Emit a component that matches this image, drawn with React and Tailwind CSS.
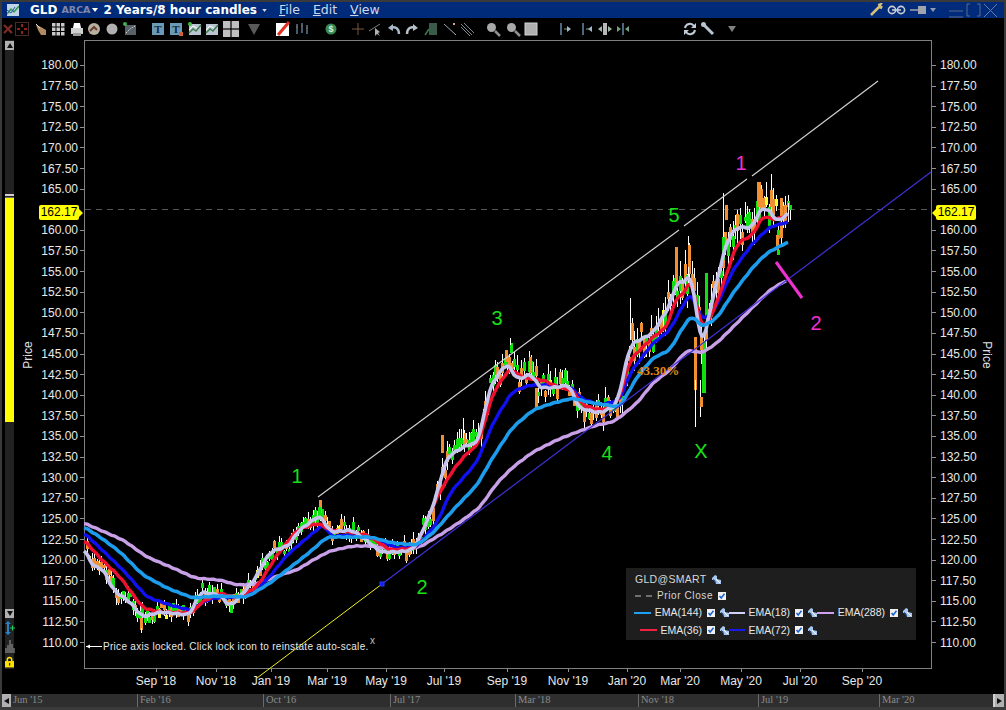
import React from 'react';

// Traced series, page coordinates [x, y]
const EMA18 = [[84,548],[93,567],[103,568],[113,590],[130,602],[142,617],[160,612],[190,615],[200,592],[220,595],[230,607],[253,582],[270,552],[290,545],[297,532],[320,515],[330,532],[352,530],[370,543],[380,552],[397,552],[413,550],[420,537],[433,507],[447,457],[467,445],[478,443],[490,387],[507,362],[517,380],[533,373],[537,387],[550,388],[570,385],[578,408],[600,413],[617,405],[630,345],[653,333],[670,305],[678,278],[685,287],[690,267],[702,350],[710,310],[727,240],[737,227],[753,228],[760,208],[770,210],[777,223],[788,213]];
const EMA36 = [[84,540],[100,558],[120,577],[143,608],[160,612],[193,613],[200,603],[220,593],[237,598],[257,587],[277,555],[297,530],[318,523],[330,530],[350,532],[367,535],[390,550],[417,548],[420,537],[437,497],[453,470],[467,453],[478,445],[493,393],[510,368],[523,378],[543,380],[560,388],[573,390],[582,405],[600,410],[617,405],[630,360],[653,337],[667,327],[678,292],[683,300],[690,275],[702,330],[713,313],[727,273],[737,243],[753,235],[763,215],[773,220],[780,218],[788,215]];
const EMA72 = [[84,533],[100,548],[123,570],[147,597],[170,605],[193,611],[197,605],[213,598],[243,597],[267,580],[287,555],[307,538],[325,523],[330,537],[347,535],[373,538],[397,548],[417,547],[420,543],[437,523],[450,493],[477,462],[493,423],[512,392],[530,385],[547,385],[573,388],[580,398],[600,405],[620,400],[630,373],[653,343],[670,330],[682,307],[691,292],[702,320],[713,313],[733,270],[753,243],[770,227],[788,222]];
const EMA144 = [[84,527],[100,537],[120,552],[143,575],[167,588],[193,598],[217,596],[247,597],[270,583],[287,570],[310,552],[327,537],[347,537],[370,537],[393,543],[417,545],[433,533],[453,510],[477,485],[493,457],[512,428],[533,410],[550,404],[573,398],[587,402],[607,405],[620,407],[637,377],[653,358],[670,350],[683,327],[692,315],[702,327],[717,318],[733,293],[753,267],[767,253],[788,242]];
const EMA288 = [[84,523],[100,530],[123,540],[147,557],[173,568],[195,578],[220,580],[237,585],[257,584],[280,575],[297,570],[313,560],[330,551],[353,546],[373,546],[397,550],[420,547],[443,533],[463,520],[480,507],[497,483],[513,467],[533,452],[557,440],[577,432],[597,425],[613,422],[620,417],[637,403],[653,383],[670,370],[687,350],[702,353],[717,343],[733,327],[753,307],[770,290],[787,280]];

// Hand-placed spikes [x, top, bottom, colour]
const SPIKES = [
  [630,298,340,'#ffffff'],[631,323,340,'#f09030'],[675,247,283,'#f09030'],[688,236,285,'#ffffff'],[688,245,267,'#f09030'],
  [694,337,390,'#f09030'],[695,380,427,'#ffffff'],[700,380,417,'#ffffff'],[702,350,393,'#10e010'],[703,350,393,'#10e010'],
  [700,397,407,'#f09030'],[705,273,317,'#10e010'],[723,193,240,'#ffffff'],[725,205,220,'#f09030'],[722,237,260,'#10e010'],
  [757,182,207,'#f09030'],[758,182,207,'#f09030'],[780,198,217,'#f09030'],[788,203,222,'#ffffff'],[776,235,250,'#f09030'],
  [777,250,255,'#10e010'],[319,500,513,'#f09030'],[318,507,520,'#10e010'],[510,343,353,'#10e010'],[510,338,345,'#ffffff'],
  [529,357,373,'#f09030'],[535,388,410,'#f09030'],[441,435,453,'#f09030'],[463,418,440,'#ffffff'],[140,618,630,'#f09030'],
  [141,628,633,'#ffffff'],[505,350,362,'#f09030'],
];

const lerp = (pts, x) => {
  for (let i = 1; i < pts.length; i++) {
    if (x <= pts[i][0]) {
      const [x0, y0] = pts[i - 1];
      const [x1, y1] = pts[i];
      return y0 + ((x - x0) / (x1 - x0)) * (y1 - y0);
    }
  }
  return pts[pts.length - 1][1];
};

// Resample and round off the traced corners, with a small wobble
const smooth = (pts, wobble = 0.5) => {
  const first = pts[0][0];
  const last = pts[pts.length - 1][0];
  const out = [];
  for (let x = first; x <= last; x += 2) {
    let sum = 0;
    for (let d = -4; d <= 4; d += 2) sum += lerp(pts, Math.min(last, Math.max(first, x + d)));
    out.push([x, +(sum / 5 + Math.sin(x * 0.7) * wobble).toFixed(1)]);
  }
  return out.map((p) => p.join(',')).join(' ');
};

// Fixed-seed candles hugging the fast average
const makeCandles = () => {
  let seed = 4711;
  const r = () => {
    seed = (seed * 16807) % 2147483647;
    return seed / 2147483647;
  };
  const out = [];
  for (let x = 86; x < 790; x += 2.4) {
    const c = lerp(EMA18, x);
    const amp = x < 420 ? 8 : x < 620 ? 12 : 18;
    const mid = c + (r() - 0.58) * amp * 1.6;
    const h = 3 + r() * amp * 0.9;
    out.push({
      x: Math.round(x),
      wt: mid - h / 2 - r() * amp * 0.9,
      wb: mid + h / 2 + r() * amp * 0.8,
      t: mid - h / 2,
      b: mid + h / 2,
      col: r() < 0.55 ? '#10e010' : r() < 0.9 ? '#f09030' : '#ffff30',
    });
  }
  return out;
};
const CANDLES = makeCandles();

const PRICES = ['180.00','177.50','175.00','172.50','170.00','167.50','165.00','','160.00','157.50','155.00','152.50','150.00','147.50','145.00','142.50','140.00','137.50','135.00','132.50','130.00','127.50','125.00','122.50','120.00','117.50','115.00','112.50','110.00'];

const DATES = [
  { label: "Sep '18", cls: 'w-[60px]' }, { label: "Nov '18", cls: 'w-[60px]' }, { label: "Jan '19", cls: 'w-[50px]' },
  { label: "Mar '19", cls: 'w-[62px]' }, { label: "May '19", cls: 'w-[56px]' }, { label: "Jul '19", cls: 'w-[60px]' },
  { label: "Sep '19", cls: 'w-[66px]' }, { label: "Nov '19", cls: 'w-[56px]' }, { label: "Jan '20", cls: 'w-[62px]' },
  { label: "Mar '20", cls: 'w-[44px]' }, { label: "May '20", cls: 'w-[78px]' }, { label: "Jul '20", cls: 'w-[40px]' },
  { label: "Sep '20", cls: 'w-[84px]' },
];

const NAV = [
  { label: "Feb '16", cls: 'w-[126px]' }, { label: "Oct '16", cls: 'w-[127px]' }, { label: "Jul '17", cls: 'w-[125px]' },
  { label: "Mar '18", cls: 'w-[123px]' }, { label: "Nov '18", cls: 'w-[120px]' }, { label: "Jul '19", cls: 'w-[121px]' },
  { label: "Mar '20", cls: 'w-[114px]' },
];

function Tool({ children, className = '' }) {
  return (
    <svg viewBox="0 0 16 16" className={`w-[16px] h-[16px] shrink-0 ${className}`}>
      {children}
    </svg>
  );
}

const Grid = ({ c = '#c8c8c8' }) => (
  <g fill={c}>
    <rect x="2" y="2" width="3.5" height="3.5" /><rect x="6.5" y="2" width="3.5" height="3.5" /><rect x="11" y="2" width="3.5" height="3.5" />
    <rect x="2" y="6.5" width="3.5" height="3.5" /><rect x="6.5" y="6.5" width="3.5" height="3.5" /><rect x="11" y="6.5" width="3.5" height="3.5" />
    <rect x="2" y="11" width="3.5" height="3.5" /><rect x="6.5" y="11" width="3.5" height="3.5" /><rect x="11" y="11" width="3.5" height="3.5" />
  </g>
);

const MiniChart = ({ dot }) => (
  <>
    <rect x="2" y="3" width="12" height="11" fill="#b8c4d0" />
    <path d="M2 12 L6 8 L9 10 L14 4" stroke="#3f7f4f" strokeWidth="1.5" fill="none" />
    <path d="M2 9 L6 5 L10 7" stroke="#ffffff" strokeWidth="1" fill="none" />
    {dot && <circle cx="3" cy="3" r="2" fill="#40c040" />}
  </>
);

const TBox = ({ red }) => (
  <>
    <rect x="2" y="2" width="12" height="12" fill="#6a9ab8" />
    <text x="8" y="12" textAnchor="middle" fontSize="11" fontWeight="700" fill="#10283c" fontFamily="'Liberation Serif', serif">T</text>
    {red && <rect x="11" y="11" width="4" height="4" fill="#d06040" />}
  </>
);

const Splitter = ({ d }) => (
  <path d={d} stroke="#6a8aa8" strokeWidth="1.5" fill="none" />
);

function Toolbar() {
  return (
    <div className="h-[22px] bg-black flex items-center shrink-0">
      <Tool className="-ml-[2px]"><path d="M4 4 L12 12 M12 4 L4 12" stroke="#7a2a20" strokeWidth="2.4" /></Tool>
      <Tool className="-ml-[2px]"><rect x="1.5" y="1.5" width="13" height="13" fill="none" stroke="#4a2a2a" /><path d="M8 3 V6 M8 10 V13 M3 8 H6 M10 8 H13" stroke="#c03020" strokeWidth="1.5" /></Tool>
      <Tool className="ml-[3px]"><path d="M3 4 L8 6 L13 9 L13 14 L8 14 L5 9 Z" fill="#b08a60" /><path d="M3 3 L7 7" stroke="#d8d8d8" /></Tool>
      <Tool className="ml-[1px]"><Grid /></Tool>
      <Tool className="ml-[2px]"><rect x="3" y="7" width="12" height="6" fill="#d0d0d0" /><path d="M5 7 L6 2 L12 2 L13 7 Z" fill="#ffffff" /><rect x="5" y="12" width="8" height="3" fill="#9a9a9a" /></Tool>
      <Tool className="ml-[2px]"><circle cx="8" cy="8" r="6" fill="#b8b0a0" /><path d="M4 10 L8 6 L11 9" stroke="#6a4030" strokeWidth="2" fill="none" /></Tool>
      <Tool className="ml-[2px]"><circle cx="8" cy="8" r="5.5" fill="#b0b0b0" /></Tool>
      <Tool className="ml-[2px]"><rect x="3" y="4" width="11" height="10" fill="#586068" /><path d="M4 12 L8 8 L13 5" stroke="#d0d8e0" strokeDasharray="1.5 1" fill="none" /><circle cx="3" cy="3" r="2" fill="#40b050" /></Tool>
      <Tool className="ml-[12px]"><TBox /></Tool>
      <Tool className="ml-[2px]"><TBox red /></Tool>
      <Tool className="ml-[3px]"><MiniChart dot /></Tool>
      <Tool className="ml-[1px]"><MiniChart /></Tool>
      <svg viewBox="0 0 16 16" className="w-[16px] h-[16px] ml-[3px] shrink-0"><rect x="0" y="0" width="7.4" height="7.4" fill="#c0c0c0" /><rect x="8.6" y="0" width="7.4" height="7.4" fill="#c0c0c0" /><rect x="0" y="8.6" width="7.4" height="7.4" fill="#c0c0c0" /><rect x="8.6" y="8.6" width="7.4" height="7.4" fill="#c0c0c0" /></svg>
      <Tool className="ml-[7px]"><path d="M2 3 H14 L8 14 Z" fill="#5a5a5a" /></Tool>
      <Tool className="ml-[13px]"><rect x="1" y="2" width="13" height="13" fill="#ffffff" /><path d="M3 14 L14 1" stroke="#e03020" strokeWidth="3" /></Tool>
      <Tool className="ml-[3px]"><path d="M3 3 V13 M8 2 V12 M13 4 V13" stroke="#5a7a90" strokeWidth="1.5" /><path d="M2 6 H4 M7 5 H9 M12 7 H14" stroke="#8a6a50" /></Tool>
      <Tool className="ml-[13px]"><circle cx="8" cy="8" r="5.5" fill="#3a8a50" /><text x="8" y="11" textAnchor="middle" fontSize="9" fontWeight="700" fill="#d8f0d8" fontFamily="'Liberation Sans', sans-serif">$</text></Tool>
      <Tool className="ml-[11px]"><path d="M8 2 V14 M2 8 H14" stroke="#7a5a40" /></Tool>
      <Tool className="ml-[2px]"><path d="M1 10 L12 3" stroke="#808080" /><path d="M7 7 L7 15 L9 13 L12 15 L10 12 L12 11 Z" fill="#b0b0b0" /></Tool>
      <Tool className="ml-[2px]"><path d="M13 13 C13 7 9 5 4 7" stroke="#a8b8c8" strokeWidth="2.4" fill="none" /><path d="M2 7 L7 3 L7 10 Z" fill="#a8b8c8" /></Tool>
      <Tool className="ml-[2px]"><path d="M3 13 C3 7 7 5 12 7" stroke="#b8c0c8" strokeWidth="2.4" fill="none" /><path d="M14 7 L9 3 L9 10 Z" fill="#b8c0c8" /></Tool>
      <Tool className="ml-[3px]"><rect x="6" y="2" width="8" height="12" fill="#3a5a4a" /><path d="M2 14 L6 8" stroke="#3a7a4a" strokeWidth="1.5" /></Tool>
      <Tool className="ml-[3px]"><path d="M2 3 L14 14" stroke="#a0a8b0" /><rect x="11" y="2" width="2" height="2" fill="#d0a090" /></Tool>
      <Tool className="ml-[1px]"><path d="M2 3 L13 14 M5 2 L15 12 M2 6 L11 15" stroke="#808890" /></Tool>
      <Tool className="ml-[10px]"><circle cx="6.5" cy="6.5" r="4.5" fill="#a8a8a8" /><path d="M10 10 L15 15" stroke="#909090" strokeWidth="2.5" /></Tool>
      <Tool className="ml-[4px]"><circle cx="6.5" cy="6.5" r="4.5" fill="#a8a8a8" /><path d="M10 10 L15 15" stroke="#909090" strokeWidth="2.5" /></Tool>
      <Tool className="ml-[2px]"><rect x="2" y="2" width="12" height="12" fill="#b0b0b0" stroke="#d0d0d0" /></Tool>
      <Tool className="ml-[19px]"><Splitter d="M3 2 V14" /><path d="M6 8 H9" stroke="#7a9a80" /><path d="M9 5 L13 8 L9 11 Z" fill="#a0b8c8" /></Tool>
      <Tool className="ml-[5px]"><Splitter d="M4 2 V14" /><path d="M7 8 H10" stroke="#7a9a80" /><path d="M13 5 L9 8 L13 11 Z" fill="#a0b8c8" /></Tool>
      <Tool className="ml-[2px]"><rect x="6" y="2" width="4" height="12" fill="#b8b8b8" /><path d="M5 5 L1 8 L5 11 Z M11 5 L15 8 L11 11 Z" fill="#a0b8a8" /></Tool>
      <Tool className="ml-[2px]"><Splitter d="M8 2 V14" /><path d="M2 5 L6 8 L2 11 Z M14 5 L10 8 L14 11 Z" fill="#70a080" /></Tool>
      <Tool className="ml-[51px]"><path d="M3 7 A5 5 0 0 1 12 5 M13 9 A5 5 0 0 1 4 11" stroke="#c0ccd8" strokeWidth="2" fill="none" /><path d="M14 2 V7 H9 Z M2 14 V9 H7 Z" fill="#c0ccd8" /></Tool>
      <Tool className="ml-[2px]"><path d="M3 3 L13 13" stroke="#b8c4d0" strokeWidth="3" /><circle cx="3.5" cy="3.5" r="2.5" fill="#b8c4d0" /></Tool>
      <Tool className="ml-[8px]"><path d="M4 5 H12 L8 11 Z" fill="#808080" /></Tool>
    </div>
  );
}

function TitleBar() {
  return (
    <div className="h-[16px] bg-[#002a7a] flex items-center shrink-0 font-['DejaVu_Sans',sans-serif] relative">
      <svg viewBox="0 0 12 12" className="w-[12px] h-[12px] ml-[5px]">
        <rect width="12" height="12" fill="#c0d4e8" />
        <path d="M0 10 L4 5 L7 8 L12 2" stroke="#2a9a50" strokeWidth="1.5" fill="none" />
        <path d="M0 6 L4 9 L8 3" stroke="#3050a0" fill="none" />
      </svg>
      <span className="ml-[11px] text-[12px] font-bold text-white">GLD</span>
      <span className="ml-[4px] text-[9.5px] font-bold text-[#8088a8]">ARCA</span>
      <svg viewBox="0 0 6 4" className="w-[6px] h-[4px] ml-[2px]"><path d="M0 0 H6 L3 4 Z" fill="#ffffff" /></svg>
      <span className="ml-[5px] text-[12px] font-bold text-white">2 Years/8 hour candles</span>
      <svg viewBox="0 0 6 4" className="w-[5px] h-[3px] ml-[5px]"><path d="M0 0 H6 L3 4 Z" fill="#d0d8e8" /></svg>
      <div className="ml-[12px] flex text-[12.5px] text-[#d0d8e8] gap-[13px]">
        <span><span className="underline">F</span>ile</span>
        <span><span className="underline">E</span>dit</span>
        <span><span className="underline">V</span>iew</span>
      </div>
      <div className="ml-auto mr-[6px] flex items-center">
        <svg viewBox="0 0 14 14" className="w-[14px] h-[14px]"><path d="M2 12 L10 4" stroke="#d8c078" strokeWidth="2.5" /><path d="M9 2 L12 1 L10 4 L12 5 L13 3" stroke="#d8c078" strokeWidth="2" fill="none" /></svg>
        <svg viewBox="0 0 20 10" className="w-[20px] h-[10px] ml-[4px]"><circle cx="5" cy="5" r="3.6" stroke="#c8ccd4" strokeWidth="1.6" fill="none" /><circle cx="14" cy="5" r="3.6" stroke="#c8ccd4" strokeWidth="1.6" fill="none" /><path d="M5 5 H14" stroke="#c8ccd4" strokeWidth="1.6" /></svg>
        <svg viewBox="0 0 18 10" className="w-[18px] h-[10px] ml-[3px]"><path d="M0 5 H8" stroke="#a0a4ac" strokeWidth="1.5" /><rect x="8" y="1" width="8" height="8" fill="#a0a4ac" /></svg>
        <svg viewBox="0 0 6 4" className="w-[6px] h-[4px] ml-[2px]"><path d="M0 0 H6 L3 4 Z" fill="#909cb4" /></svg>
        <svg viewBox="0 0 14 8" className="w-[14px] h-[8px] ml-[13px] self-end"><path d="M0 1 H14 M0 7 H14" stroke="#5a6a8c" /></svg>
        <svg viewBox="0 0 15 14" className="w-[15px] h-[14px] ml-[3px]"><path d="M4 1 H1 V13 H4 M11 1 H14 V13 H11" stroke="#5a6a8c" fill="none" /></svg>
        <svg viewBox="0 0 15 15" className="w-[15px] h-[15px] ml-[2px]"><path d="M1 1 L14 14 M14 1 L1 14" stroke="#6a7a9c" /></svg>
      </div>
    </div>
  );
}

function PriceAxis({ side }) {
  const left = side === 'left';
  return (
    <div className="pt-[15.2px]">
      {PRICES.map((p, i) => (
        <div key={i} className={`h-[20.61px] flex items-center text-[12px] text-[#e8e8e8] leading-none ${left ? 'justify-end' : 'justify-start'}`}>
          {p && !left && <span className="w-[4px] h-px bg-[#909090] mr-[4px]" />}
          {p && <span>{p}</span>}
          {p && left && <span className="w-[4px] h-px bg-[#909090] ml-[2px]" />}
        </div>
      ))}
    </div>
  );
}

function Wrench() {
  return (
    <svg viewBox="0 0 9 9" className="w-[9px] h-[9px] shrink-0">
      <path d="M0 3 L3 0 L5 1 L5 4 L9 5 L9 9 L4 9 L3 5 L0 5 Z" fill="#a8c8f0" />
      <path d="M4 4 L8 8" stroke="#ffffff" />
      <path d="M1 4 L4 8" stroke="#3060b0" />
    </svg>
  );
}

function Check() {
  return (
    <svg viewBox="0 0 8 8" className="w-[8px] h-[8px] shrink-0">
      <rect width="8" height="8" fill="#f0f0f0" />
      <path d="M1.5 4 L3.2 6 L6.5 1.8" stroke="#1a5fd0" strokeWidth="1.5" fill="none" />
    </svg>
  );
}

function LegendItem({ color, label }) {
  return (
    <div className="flex items-center justify-end">
      <span className={`w-[17px] h-[2px] ${color}`} />
      <span className="ml-[4px] text-[10.5px] text-[#e8e8e8] leading-none">{label}</span>
      <span className="ml-[5px]"><Check /></span>
      <span className="ml-[5px]"><Wrench /></span>
    </div>
  );
}

function Legend() {
  return (
    <div className="absolute left-[541px] top-[527px] w-[290px] h-[72px] bg-[#1e1e1e] pl-[9px] pt-[5px]">
      <div className="h-[13px] flex items-center text-[10.5px] text-[#d8d8d8] tracking-[0.3px] leading-none">
        GLD@SMART
        <span className="ml-[5px]"><Wrench /></span>
      </div>
      <div className="h-[18px] pt-[1px] flex items-center text-[10px] text-[#d8d8d8] tracking-[0.6px] leading-none">
        <span className="w-[17px] border-t-2 border-dashed border-[#707070]" />
        <span className="ml-[5px]">Prior Close</span>
        <span className="ml-[5px]"><Check /></span>
      </div>
      <div className="grid grid-cols-[95px_88px_95px] h-[17px] items-center -ml-[1px]">
        <LegendItem color="bg-[#20a0f0]" label="EMA(144)" />
        <LegendItem color="bg-[#d0d0f8]" label="EMA(18)" />
        <LegendItem color="bg-[#d0a0f0]" label="EMA(288)" />
      </div>
      <div className="grid grid-cols-[95px_88px_95px] h-[18px] items-center -ml-[1px]">
        <LegendItem color="bg-[#f02040]" label="EMA(36)" />
        <LegendItem color="bg-[#1818f0]" label="EMA(72)" />
      </div>
    </div>
  );
}

function ChartDrawing() {
  const label = (x, y, t, fill) => (
    <text key={`${t}${x}`} x={x} y={y} fill={fill} fontSize="20" textAnchor="middle" fontFamily="'Liberation Sans', sans-serif">{t}</text>
  );
  return (
    <svg viewBox="85 41 846 627" className="w-[846px] h-[627px] block overflow-visible">
      <line x1="85" y1="209.5" x2="931" y2="209.5" stroke="#555555" strokeDasharray="6 5" />

      <g shapeRendering="crispEdges">
        {CANDLES.map((c, i) => (
          <g key={i}>
            <line x1={c.x + 1} x2={c.x + 1} y1={c.wt} y2={c.wb} stroke="#ffffff" />
            <rect x={c.x} width="3" y={c.t} height={c.b - c.t} fill={c.col} />
          </g>
        ))}
        {SPIKES.map(([x, a, b, col], i) => (
          <rect key={i} x={x} width={col === '#ffffff' ? 1 : 3} y={a} height={b - a} fill={col} />
        ))}
      </g>

      <polyline points={smooth(EMA288, 0.3)} fill="none" stroke="#c8a0e8" strokeWidth="3.4" strokeLinejoin="round" />
      <polyline points={smooth(EMA72, 0.4)} fill="none" stroke="#1010f0" strokeWidth="3.4" strokeLinejoin="round" />
      <polyline points={smooth(EMA36, 0.5)} fill="none" stroke="#f01030" strokeWidth="3.4" strokeLinejoin="round" />
      <polyline points={smooth(EMA18, 0.6)} fill="none" stroke="#c4c4ec" strokeWidth="3.6" strokeLinejoin="round" />
      <polyline points={smooth(EMA144, 0.3)} fill="none" stroke="#1c9cec" strokeWidth="3.6" strokeLinejoin="round" />

      <path d="M318 497 L679 230 M684 226 L747 179 M752 176 L878 81" stroke="#d0d0d0" strokeWidth="1.2" fill="none" />
      <line x1="382" y1="584" x2="931" y2="172" stroke="#4030d8" strokeWidth="1.2" />
      <line x1="257" y1="678" x2="382" y2="584" stroke="#f0f020" />
      <rect x="380" y="582" width="4" height="4" fill="#1818f0" stroke="#2040ff" />
      <line x1="776" y1="262" x2="802" y2="298" stroke="#f030d0" strokeWidth="3" />

      {label(297, 483, '1', '#18e018')}
      {label(422, 594, '2', '#18e018')}
      {label(497, 325, '3', '#18e018')}
      {label(607, 460, '4', '#18e018')}
      {label(674, 222, '5', '#18e018')}
      {label(701, 458, 'X', '#18e018')}
      {label(741, 170, '1', '#f030d0')}
      {label(816, 330, '2', '#f030d0')}
      <text x="658" y="375" fill="#e08a10" fontSize="13" fontWeight="700" textAnchor="middle" fontFamily="'Liberation Serif', serif">43.30%</text>
    </svg>
  );
}

export default function App() {
  return (
    <div className="w-[1006px] h-[710px] bg-[#3a3a3a] pt-[2px] px-[2px] flex flex-col overflow-hidden font-['Liberation_Sans',Arial,sans-serif]">
      <TitleBar />
      <Toolbar />

      <div className="h-[629px] flex bg-black shrink-0">
        {/* left rail with the price slider */}
        <div className="w-[12px] pl-[3px] shrink-0">
          <div className="h-full w-[9px] bg-[#222222] flex flex-col items-center">
            <div className="w-[9px] h-[9px] bg-[#b0b0b0] flex items-center justify-center mt-[1px]">
              <svg viewBox="0 0 6 5" className="w-[6px] h-[5px]"><path d="M3 0 L6 5 H0 Z" fill="#101010" /></svg>
            </div>
            <div className="mt-[144px] w-[9px] h-[2px] bg-[#d0d0d0]" />
            <div className="mt-[1px] w-[9px] h-[1px] bg-[#707070]" />
            <div className="w-[9px] h-[224px] bg-[#ffff00]" />
            <div className="mt-[187px] w-[9px] h-[9px] bg-[#b0b0b0] flex items-center justify-center">
              <svg viewBox="0 0 6 5" className="w-[6px] h-[5px]"><path d="M0 0 H6 L3 5 Z" fill="#101010" /></svg>
            </div>
            <svg viewBox="0 0 10 16" className="w-[10px] h-[16px] mt-[2px] overflow-visible"><path d="M3 1 L6 4 H4 V12 H6 L3 15 L0 12 H2 V4 H0 Z" fill="#2a80c0" /><path d="M5 8 H10 M7.5 5.5 V10.5" stroke="#20d060" /></svg>
            <svg viewBox="0 0 10 14" className="w-[10px] h-[14px] mt-[3px]"><path d="M1 14 V9 M3 14 V6 M5 14 V1 M7 14 V5 M9 14 V9" stroke="#a0a0a0" /></svg>
            <svg viewBox="0 0 10 12" className="w-[9px] h-[12px] mt-[3px]"><path d="M2.5 6 V3.5 A2.5 2.5 0 0 1 7.5 3.5 V6" stroke="#ffe000" strokeWidth="1.6" fill="none" /><rect y="5" width="10" height="7" fill="#ffe000" /><rect x="4.4" y="7" width="1.4" height="3" fill="#303000" /></svg>
          </div>
        </div>

        {/* left price axis */}
        <div className="w-[70px] shrink-0 relative">
          <span className="absolute left-[-1px] top-[306px] w-[30px] text-center text-[12px] text-[#e0e0e0] -rotate-90">Price</span>
          <PriceAxis side="left" />
          <div className="absolute left-[25px] top-[165px] h-[15px] w-[40px] bg-[#ffff00] rounded-[2px] text-[12px] text-black leading-[15px] text-center">162.17</div>
          <div className="absolute left-[65px] top-[169px] w-0 h-0 border-y-[4px] border-y-transparent border-l-[4px] border-l-[#ffff00]" />
        </div>

        {/* plot */}
        <div className="w-[848px] shrink-0 relative border border-[#808080]">
          <ChartDrawing />
          <Legend />
          <svg viewBox="0 0 16 5" className="absolute left-[1px] top-[603px] w-[16px] h-[5px]"><path d="M0 2.5 H16" stroke="#ffffff" /><path d="M0 2.5 L4 0.5 V4.5 Z" fill="#ffffff" /></svg>
          <div className="absolute left-[18px] top-[601px] text-[10px] leading-none tracking-[0.3px] text-[#e8e8e8] whitespace-nowrap">Price axis locked. Click lock icon to reinstate auto-scale.</div>
          <div className="absolute left-[285px] top-[595px] text-[10px] leading-none text-[#c0c0c0]">x</div>
        </div>

        {/* right price axis */}
        <div className="w-[72px] shrink-0 relative">
          <PriceAxis side="right" />
          <span className="absolute left-[40px] top-[306px] w-[30px] text-center text-[12px] text-[#e0e0e0] rotate-90">Price</span>
          <div className="absolute left-[4px] top-[165px] h-[15px] w-[40px] bg-[#ffff00] rounded-[2px] text-[12px] text-black leading-[15px] text-center">162.17</div>
          <div className="absolute left-0 top-[169px] w-0 h-0 border-y-[4px] border-y-transparent border-r-[4px] border-r-[#ffff00]" />
        </div>
      </div>

      {/* date axis */}
      <div className="h-[25px] bg-black flex shrink-0 pl-[124px]">
        {DATES.map((d) => (
          <div key={d.label} className={`${d.cls} shrink-0 flex flex-col items-center`}>
            <span className="w-px h-[3px] bg-[#909090]" />
            <span className="mt-[1px] text-[12px] leading-[16px] text-[#e8e8e8] whitespace-nowrap">{d.label}</span>
          </div>
        ))}
      </div>

      {/* navigator */}
      <div className="h-[13px] bg-[#2e2e2e] flex shrink-0 items-center font-['Liberation_Serif',serif] text-[10.5px] text-[#8a8a8a] leading-none">
        <div className="w-[9px] h-[13px] bg-[#b0b0b0] flex items-center justify-center shrink-0">
          <svg viewBox="0 0 5 6" className="w-[5px] h-[6px]"><path d="M5 0 V6 L0 3 Z" fill="#101010" /></svg>
        </div>
        <span className="w-[126px] pl-[2px] shrink-0">Jun '15</span>
        {NAV.map((n) => (
          <span key={n.label} className={`${n.cls} shrink-0 h-[13px] border-l border-[#6a6a6a] pl-[2px] flex items-center`}>{n.label}</span>
        ))}
        <div className="w-[2px] h-[13px] bg-[#d0d0d0] shrink-0" />
        <div className="w-[9px] h-[13px] bg-[#b0b0b0] flex items-center justify-center shrink-0 ml-auto">
          <svg viewBox="0 0 5 6" className="w-[5px] h-[6px]"><path d="M0 0 V6 L5 3 Z" fill="#101010" /></svg>
        </div>
      </div>
    </div>
  );
}
